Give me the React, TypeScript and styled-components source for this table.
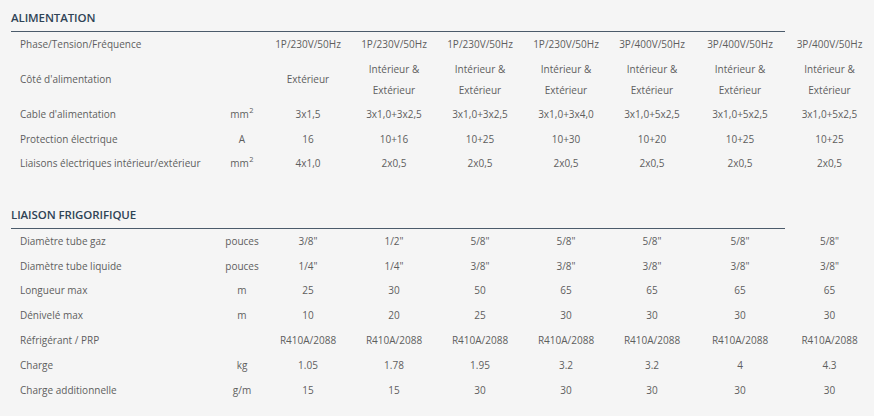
import React from "react";
import styled, { createGlobalStyle } from "styled-components";

const Global = createGlobalStyle`
  html, body { margin: 0; padding: 0; background: #f5f5f5; }
  body { font-family: "Open Sans", "Noto Sans", sans-serif; color: #5b5b5b; }
`;

const Page = styled.div`
  width: 874px;
  height: 416px;
  background: #f5f5f5;
  padding-top: 10px;
  box-sizing: border-box;
  overflow: hidden;
`;

const Section = styled.section<{ $gap?: number }>`
  display: grid;
  grid-template-columns: 11px 208px 46px repeat(5, 86px) 90px 89px;
  margin-top: ${(p) => p.$gap ?? 0}px;
`;

const Heading = styled.h2`
  grid-column: 2 / 10;
  margin: 0;
  font-size: 11.5px;
  font-weight: 600;
  line-height: 16px;
  letter-spacing: -0.1px;
  color: #2f4356;
  text-transform: uppercase;
  padding-bottom: 5px;
  border-bottom: 1.5px solid #4b5b6b;
`;

const Cell = styled.div<{ $kind: "label" | "unit" | "value"; $h: number }>`
  grid-column: ${(p) => (p.$kind === "label" ? "2" : "auto")};
  min-height: ${(p) => p.$h}px;
  display: flex;
  align-items: center;
  justify-content: ${(p) => (p.$kind === "label" ? "flex-start" : "center")};
  text-align: ${(p) => (p.$kind === "label" ? "left" : "center")};
  padding-left: ${(p) => (p.$kind === "label" ? "9px" : "0")};
  font-size: 10px;
  font-weight: 400;
  line-height: 21px;
  color: #5e5e5e;
  white-space: nowrap;
`;

const Text = styled.span`
  display: block;
`;

const Sup = styled.sup`
  font-size: 7.5px;
  line-height: 0;
  vertical-align: 5px;
  margin-left: 0.5px;
`;

type Row = { label: string; unit: React.ReactNode; values: React.ReactNode[]; h?: number };

const mm2 = (
  <>
    mm<Sup>2</Sup>
  </>
);
const ie = (
  <>
    Intérieur &amp;
    <br />
    Extérieur
  </>
);

const alimentation: Row[] = [
  {
    label: "Phase/Tension/Fréquence",
    unit: "",
    values: ["1P/230V/50Hz", "1P/230V/50Hz", "1P/230V/50Hz", "1P/230V/50Hz", "3P/400V/50Hz", "3P/400V/50Hz", "3P/400V/50Hz"],
  },
  { label: "Côté d'alimentation", unit: "", values: ["Extérieur", ie, ie, ie, ie, ie, ie], h: 46 },
  {
    label: "Cable d'alimentation",
    unit: mm2,
    values: ["3x1,5", "3x1,0+3x2,5", "3x1,0+3x2,5", "3x1,0+3x4,0", "3x1,0+5x2,5", "3x1,0+5x2,5", "3x1,0+5x2,5"],
  },
  { label: "Protection électrique", unit: "A", values: ["16", "10+16", "10+25", "10+30", "10+20", "10+25", "10+25"] },
  {
    label: "Liaisons électriques intérieur/extérieur",
    unit: mm2,
    values: ["4x1,0", "2x0,5", "2x0,5", "2x0,5", "2x0,5", "2x0,5", "2x0,5"],
  },
];

const frigo: Row[] = [
  { label: "Diamètre tube gaz", unit: "pouces", values: ["3/8\"", "1/2\"", "5/8\"", "5/8\"", "5/8\"", "5/8\"", "5/8\""] },
  { label: "Diamètre tube liquide", unit: "pouces", values: ["1/4\"", "1/4\"", "3/8\"", "3/8\"", "3/8\"", "3/8\"", "3/8\""] },
  { label: "Longueur max", unit: "m", values: ["25", "30", "50", "65", "65", "65", "65"] },
  { label: "Dénivelé max", unit: "m", values: ["10", "20", "25", "30", "30", "30", "30"] },
  {
    label: "Réfrigérant / PRP",
    unit: "",
    values: ["R410A/2088", "R410A/2088", "R410A/2088", "R410A/2088", "R410A/2088", "R410A/2088", "R410A/2088"],
  },
  { label: "Charge", unit: "kg", values: ["1.05", "1.78", "1.95", "3.2", "3.2", "4", "4.3"] },
  { label: "Charge additionnelle", unit: "g/m", values: ["15", "15", "30", "30", "30", "30", "30"] },
];

function SpecSection({ title, rows, gap, rowH }: { title: string; rows: Row[]; gap?: number; rowH: number }) {
  return (
    <Section $gap={gap}>
      <Heading>{title}</Heading>
      {rows.map((r, i) => (
        <React.Fragment key={i}>
          <Cell $kind="label" $h={r.h ?? rowH}>
            <Text>{r.label}</Text>
          </Cell>
          <Cell $kind="unit" $h={r.h ?? rowH}>
            <Text>{r.unit}</Text>
          </Cell>
          {r.values.map((v, j) => (
            <Cell key={j} $kind="value" $h={r.h ?? rowH}>
              <Text>{v}</Text>
            </Cell>
          ))}
        </React.Fragment>
      ))}
    </Section>
  );
}

export default function App() {
  return (
    <Page>
      <Global />
      <SpecSection title="Alimentation" rows={alimentation} rowH={24.5} />
      <SpecSection title="Liaison frigorifique" rows={frigo} gap={31} rowH={24.8} />
    </Page>
  );
}
